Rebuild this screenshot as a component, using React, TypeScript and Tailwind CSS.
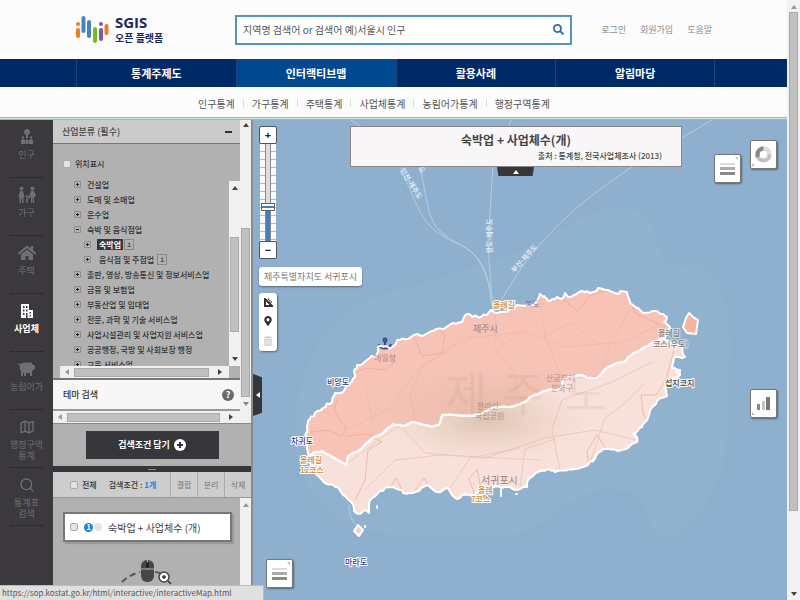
import React from "react";
import { FaSearch, FaHome, FaTrashAlt, FaMapMarkerAlt } from "react-icons/fa";
import { Search, Map as MapIcon } from "lucide-react";

type Pt = [number, number];

/* ---------- coast geometry ---------- */

const NORTH_COAST: Pt[] = [
  [309, 458], [308, 452], [306, 438], [307, 427], [308, 421], [315, 413], [323, 408], [332, 402], [335, 393],
  [343, 392], [348, 385], [355, 377], [354, 372], [357, 365], [367, 360], [377, 354], [378, 347], [392, 347],
  [400, 340], [408, 339], [417, 334], [422, 336], [428, 333], [443, 329], [453, 323], [462, 322], [467, 314],
  [473, 317], [487, 315], [491, 310], [497, 313], [513, 309], [517, 305], [527, 305], [536, 302], [540, 294],
  [550, 301], [557, 297], [563, 298], [565, 293], [568, 297], [582, 291], [590, 293], [598, 288], [608, 290],
  [615, 293], [627, 292], [630, 303], [637, 308], [643, 313], [652, 311], [663, 314], [667, 317], [664, 322],
  [670, 327], [669, 332], [663, 339],
];

const BORDER: Pt[] = [
  [663, 339], [653, 342], [643, 348], [628, 357], [626, 361], [617, 363], [608, 367], [597, 378], [587, 378],
  [582, 375], [568, 377], [563, 381], [560, 389], [550, 389], [540, 393], [530, 397], [525, 402], [515, 406],
  [495, 407], [483, 413], [472, 416], [453, 415], [442, 415], [439, 425], [432, 427], [412, 422], [403, 426],
  [393, 424], [383, 433], [370, 440], [362, 448], [348, 456], [346, 465], [338, 460], [322, 451], [313, 453],
  [309, 458],
];

const SOUTH_COAST: Pt[] = [
  [309, 458], [312, 470], [325, 483], [338, 487], [343, 495], [353, 504], [354, 511], [358, 514], [365, 510],
  [369, 513], [370, 500], [380, 491], [388, 487], [402, 490], [403, 493], [413, 493], [427, 485], [437, 492],
  [448, 488], [452, 495], [457, 499], [462, 495], [475, 495], [480, 489], [493, 487], [507, 487], [517, 490],
  [527, 487], [528, 480], [538, 472], [548, 469], [555, 472], [575, 469], [588, 465], [603, 449], [618, 451],
  [628, 448], [637, 442], [637, 437], [633, 434], [642, 427], [648, 418], [650, 410], [657, 401], [667, 396],
  [665, 387], [672, 378], [680, 375], [680, 370], [672, 368], [675, 357], [685, 357], [682, 352], [682, 347],
  [672, 343], [663, 339],
];

/* Breaks every segment into short pieces and shifts the new points a little, for a ragged shore. */
function ragged(points: Pt[], amount: number): Pt[] {
  const out: Pt[] = [points[0]];
  for (let i = 1; i < points.length; i++) {
    const [x0, y0] = points[i - 1];
    const [x1, y1] = points[i];
    const n = Math.max(1, Math.round(Math.hypot(x1 - x0, y1 - y0) / 3));
    for (let k = 1; k < n; k++) {
      const x = x0 + ((x1 - x0) * k) / n;
      const y = y0 + ((y1 - y0) * k) / n;
      const s = Math.sin(x * 12.9 + y * 78.2) * 43758.5;
      const r = (s - Math.floor(s) - 0.5) * 2 * amount;
      out.push([x + r * 0.5, y + r]);
    }
    out.push([x1, y1]);
  }
  return out;
}

const toPoints = (p: Pt[]) => p.map(([x, y]) => `${x.toFixed(1)},${y.toFixed(1)}`).join(" ");

const border = ragged(BORDER, 0.6);
const north = toPoints([...ragged(NORTH_COAST, 1.8), ...border]);
const south = toPoints([...ragged(SOUTH_COAST, 1.2), ...border]);

/* ---------- data ---------- */

const MENUS = ["통계주제도", "인터랙티브맵", "활용사례", "알림마당"];
const SUBMENUS = ["인구통계", "가구통계", "주택통계", "사업체통계", "농림어가통계", "행정구역통계"];

const TREE = [
  { label: "건설업" },
  { label: "도매 및 소매업" },
  { label: "운수업" },
  { label: "숙박 및 음식점업", open: true },
  { label: "숙박업", child: true, selected: true },
  { label: "음식점 및 주점업", child: true },
  { label: "출판, 영상, 방송통신 및 정보서비스업" },
  { label: "금융 및 보험업" },
  { label: "부동산업 및 임대업" },
  { label: "전문, 과학 및 기술 서비스업" },
  { label: "사업시설관리 및 사업지원 서비스업" },
  { label: "공공행정, 국방 및 사회보장 행정" },
  { label: "교육 서비스업" },
];

/* ---------- icons ---------- */

const Logo = () => (
  <svg width="34" height="30" viewBox="0 0 34 30" fill="none" strokeLinecap="round" strokeWidth="4" aria-hidden="true">
    <path d="M3 15v6" stroke="#f07d1e" />
    <circle cx="3" cy="9" r="2" fill="#f07d1e" />
    <path d="M8.500 3v13" stroke="#4a83b8" />
    <path d="M14 7v14" stroke="#4a83b8" />
    <path d="M20 14v12" stroke="#76b82a" />
    <path d="M26 15v9" stroke="#7a5ba6" />
    <circle cx="26" cy="9" r="2" fill="#7a5ba6" />
    <path d="M31.500 11v7" stroke="#f07d1e" />
  </svg>
);

const PeopleIcon = () => (
  <svg width="14" height="16" viewBox="0 0 14 16" fill="currentColor" aria-hidden="true">
    <circle cx="7" cy="3" r="3" />
    <path d="M6 6h2v3H6zM1 15v-4l2-1 2 1v4zM5.500 15v-4L7 10l1.500 1v4zM9 15v-4l2-1 2 1v4z" />
    <circle cx="3" cy="8.500" r="1.200" />
    <circle cx="11" cy="8.500" r="1.200" />
  </svg>
);

const FamilyIcon = () => (
  <svg width="20" height="18" viewBox="0 0 20 18" fill="currentColor" aria-hidden="true">
    <circle cx="4.500" cy="2.500" r="2" />
    <path d="M3 5h3l1.500 6H6.500v6H5v-4H4v4H2.500v-6H1.500z" />
    <circle cx="15.500" cy="2.500" r="2" />
    <path d="M14 5h3l2 5-1 1-1-1v7h-1.200v-5h-.600v5H14v-7l-2 3-1-.500z" />
    <circle cx="10" cy="10.500" r="1.200" />
    <path d="M9 12.500h2V17h-.700v-2h-.600v2H9z" />
  </svg>
);

const BuildingIcon = () => (
  <svg width="14" height="18" viewBox="0 0 14 18" fill="currentColor" aria-hidden="true">
    <path
      fillRule="evenodd"
      d="M1 2h8v6h4v8H1zM3 4v2h1.500V4zM6 4v2h1.500V4zM3 7.500v2h1.500v-2zM6 7.500v2h1.500v-2zM3 11v2h1.500v-2zM6 11v5h1.500v-5zM9.500 10v1.500H11V10zM9.500 13v1.500H11V13z"
    />
  </svg>
);

const PigIcon = () => (
  <svg width="20" height="18" viewBox="0 0 20 18" fill="currentColor" aria-hidden="true">
    <path d="M1 3l2 1.500C5 2.500 9 2 12 3l2-1.500 1 2.500 3 2v3l-2 1-1 2v4h-2v-3l-4 .200V16H7v-3l-1-.500V16H4v-5C2.500 9.500 2.500 7 3 5.500L1 4.500z" />
  </svg>
);

const MouseIcon = () => (
  <svg width="84" height="36" viewBox="0 0 84 36" fill="none" aria-hidden="true">
    <path d="M18 23C23 18 29 15 36 13M51 13c3 0 5 1 7 2" stroke="#555" strokeWidth="2" strokeDasharray="6 4" />
    <rect x="37" y="1" width="13" height="22" rx="6" fill="#474747" />
    <path d="M37 10h13M43.500 1v9" stroke="#b0b1b0" />
    <rect x="42" y="3" width="3" height="6" rx="1.500" fill="#222" />
    <circle cx="60" cy="18" r="5" fill="#fff" stroke="#444" strokeWidth="1.500" />
    <path d="M58 18h4M60 16v4M64 22l3 3" stroke="#333" strokeWidth="1.500" />
  </svg>
);

const LinesIcon = () => (
  <svg width="25" height="27" viewBox="0 0 25 27" aria-hidden="true">
    <path d="M5 8h15v2H5z" fill="#ddd" />
    <path d="M5 12h15v3H5z" fill="#aaa" />
    <path d="M5 17h15v3H5z" fill="#8a8a8a" />
    <path d="M20 2h3v3z" fill="#bbb" />
  </svg>
);

const DonutIcon = () => (
  <svg width="25" height="27" viewBox="0 0 25 27" fill="none" strokeWidth="4" aria-hidden="true">
    <circle cx="12.500" cy="13.500" r="6" stroke="#c0c0c0" />
    <path d="M7 16a6 6 0 0 1 5.500-8.500" stroke="#888" />
    <path d="M12.500 7.500a6 6 0 0 1 6 6" stroke="#ddd" />
    <path d="M1 22v3h3z" fill="#bbb" stroke="none" />
  </svg>
);

const BarsIcon = () => (
  <svg width="25" height="27" viewBox="0 0 25 27" aria-hidden="true">
    <path d="M6 14h3v6H6z" fill="#888" />
    <path d="M11 11h3v9h-3z" fill="#c4c4c4" />
    <path d="M15 7h4v13h-4z" fill="#777" />
    <path d="M1 22v3h3z" fill="#bbb" />
  </svg>
);

const SIDEBAR = [
  { lines: ["인구"], icon: <PeopleIcon /> },
  { lines: ["가구"], icon: <FamilyIcon /> },
  { lines: ["주택"], icon: <FaHome size={18} /> },
  { lines: ["사업체"], icon: <BuildingIcon />, active: true },
  { lines: ["농림어가"], icon: <PigIcon /> },
  { lines: ["행정구역", "통계"], icon: <MapIcon size={16} strokeWidth={2} /> },
  { lines: ["통계표", "검색"], icon: <Search size={16} strokeWidth={2} /> },
];

/* ---------- small parts ---------- */

const ARROWS = {
  up: "M0 5h6L3 1z",
  down: "M0 1h6L3 5z",
  left: "M5 0v6L1 3z",
  right: "M1 0v6l4-3z",
};

function Arrow({ dir, color = "#444" }: { dir: keyof typeof ARROWS; color?: string }) {
  return (
    <svg width="6" height="6" viewBox="0 0 6 6" className="shrink-0" aria-hidden="true">
      <path d={ARROWS[dir]} fill={color} />
    </svg>
  );
}

function HScroll({ className = "" }: { className?: string }) {
  return (
    <div className={`flex h-3 items-center gap-1 bg-[#f0f0f0] pl-1 pr-[6px] ${className}`}>
      <Arrow dir="left" color="#999" />
      <div className="mr-1 h-[9px] flex-1 border border-[#aaa] bg-[#c1c1c1]" />
      <Arrow dir="right" />
    </div>
  );
}

function Check({ id }: { id: string }) {
  return (
    <input
      id={id}
      type="checkbox"
      className="size-2 shrink-0 appearance-none rounded-[2px] border border-[#aaa] bg-[#e4e4e4] checked:bg-[#1e7fd6]"
    />
  );
}

function Header() {
  return (
    <header className="bg-[#fcfcfc]">
      <div className="flex h-[59px] items-center pl-[75px] pr-[75px]">
        <a href="#home" className="flex w-[160px] items-center gap-[6px]">
          <Logo />
          <span className="flex flex-col text-[#1b2a5c]">
            <span className="font-['Open_Sans',sans-serif] text-[15px] font-bold leading-[15px]">SGIS</span>
            <span className="text-[10px] font-bold leading-[15px]">오픈 플랫폼</span>
          </span>
        </a>
        <form className="flex h-[30px] flex-1 items-center border-2 border-[#5592c4] bg-white pl-[6px] pr-[6px]">
          <input
            aria-label="검색"
            placeholder="지역명 검색어 or 검색어 예)서울시 인구"
            className="min-w-0 flex-1 bg-transparent text-[10px] outline-none placeholder:text-[#555]"
          />
          <button type="button" aria-label="검색" className="text-[#2f6aa8]">
            <FaSearch size={11} />
          </button>
        </form>
        <nav className="ml-[29px] flex gap-[14px] text-[9px] text-[#8a8a8a]">
          <a href="#login">로그인</a>
          <a href="#join">회원가입</a>
          <a href="#help">도움말</a>
        </nav>
      </div>
      <nav className="grid h-7 grid-cols-4 bg-[#002a66] pl-[76px] pr-[72px]">
        {MENUS.map((m, i) => (
          <a
            key={m}
            href="#menu"
            className={`flex items-center justify-center border-l border-[#1f467c] text-[11px] font-bold text-white last:border-r ${
              i === 1 ? "bg-[#004990]" : ""
            }`}
          >
            {m}
          </a>
        ))}
      </nav>
      <nav className="flex h-[30px] items-center pl-[198px] pt-[2px] text-[10px] text-[#555]">
        {SUBMENUS.map((m) => (
          <a key={m} href="#sub" className="flex items-center after:mx-2 after:h-2 after:w-px after:bg-[#ddd] last:after:hidden">
            {m}
          </a>
        ))}
      </nav>
      <div className="h-[3px] border-y border-[#8fb9d6] bg-[#cfe8d8]" />
    </header>
  );
}

function Sidebar() {
  return (
    <nav className="w-[53px] shrink-0 bg-[#3b393e] px-[10px]">
      {SIDEBAR.map((s) => (
        <a
          key={s.lines[0]}
          href="#stat"
          className={`flex h-[58px] flex-col items-center whitespace-nowrap border-b border-dotted border-[#1c1b20] pt-2 text-[9px] leading-[11px] ${
            s.active ? "font-bold text-white" : "text-[#706f73]"
          }`}
        >
          <span className="mb-[3px] flex h-[18px] items-center">{s.icon}</span>
          {s.lines.map((l) => (
            <span key={l}>{l}</span>
          ))}
        </a>
      ))}
    </nav>
  );
}

function Tree() {
  return (
    <ul className="h-[189px] flex-1 overflow-hidden whitespace-nowrap pl-[14px] text-[8px] font-medium text-[#333]">
      {TREE.map((t) => (
        <li key={t.label} className={`flex h-[15px] items-center ${t.child ? "pl-[10px]" : ""}`}>
          <button type="button" aria-label={t.label} className="mr-[6px]">
            <svg width="7" height="7" viewBox="0 0 7 7" className="block">
              <path d="M.500.500h6v6h-6z" fill="none" stroke="#8c8c8c" />
              <path d={t.open ? "M2 3h3v1H2z" : "M2 3h3v1H2zM3 2h1v3H3z"} fill="#222" />
            </svg>
          </button>
          <span className={t.selected ? "bg-[#37363b] px-[2px] leading-[11px] font-bold text-white" : t.child ? "px-[2px]" : ""}>
            {t.label}
          </span>
          {t.child && (
            <button type="button" aria-label="정보" className="ml-px h-[11px] w-[10px] border border-[#888] font-mono text-[8px] leading-[9px]">
              i
            </button>
          )}
        </li>
      ))}
    </ul>
  );
}

function Panel() {
  return (
    <aside className="flex w-[200px] shrink-0 flex-col border-r-2 border-[#8b8b8b] bg-[#b0b1b0]">
      <div className="flex">
        <div className="min-w-0 flex-1">
          <div className="flex h-6 items-center justify-between border-b border-[#777] bg-[#cbcbcb] pl-[9px] pr-2 text-[9px] font-medium text-[#444]">
            산업분류 (필수)
            <button type="button" aria-label="접기" className="h-[2px] w-[7px] bg-[#333]" />
          </div>
          <div className="flex h-[33px] items-center gap-1 pl-[10px] pt-[7px] text-[8px] font-medium text-[#333]">
            <Check id="pos" />
            <label htmlFor="pos">위치표시</label>
          </div>
          <div className="flex pl-[7px]">
            <Tree />
            <div className="mt-1 flex w-[11px] flex-col items-center justify-between bg-[#f0f0f0] py-1">
              <Arrow dir="up" />
              <div className="mt-[46px] mb-6 w-[9px] flex-1 border border-[#aaa] bg-[#c1c1c1]" />
              <Arrow dir="down" />
            </div>
          </div>
          <HScroll className="ml-[7px] mr-[11px]" />
          <div className="flex h-[33px] items-center justify-between border-y-2 border-t-[#777] border-b-[#999] bg-[#f8f7f7] pl-[10px] pr-[6px] text-[9px] font-medium text-[#333]">
            테마 검색
            <button type="button" aria-label="도움말" className="size-3 rounded-full bg-[#6a6a6a] text-[9px] font-bold leading-3 text-white">
              ?
            </button>
          </div>
          <HScroll />
        </div>
        <div className="flex w-[11px] flex-col items-center bg-[#f0f0f0] pt-[2px] pb-4">
          <Arrow dir="up" />
          <div className="mt-[100px] mb-1 w-[9px] flex-1 border border-[#aaa] bg-[#c1c1c1]" />
          <Arrow dir="down" color="#888" />
        </div>
      </div>
      <div className="flex h-[43px] items-center justify-center border-t border-[#888]">
        <button type="button" className="flex h-7 w-[133px] items-center justify-center gap-1 bg-[#37363b] text-[9px] font-bold text-white">
          검색조건 담기
          <svg width="12" height="12" viewBox="0 0 12 12" aria-hidden="true">
            <circle cx="6" cy="6" r="6" fill="#fff" />
            <path d="M3 6h6M6 3v6" stroke="#37363b" strokeWidth="2" />
          </svg>
        </button>
      </div>
      <div className="flex h-[6px] items-center justify-center bg-[#37363b]">
        <div className="h-px w-2 bg-[#888]" />
      </div>
      <div className="flex h-[26px] items-stretch border-b border-[#999] bg-[#cdcdcd] text-[8px] text-[#777]">
        <div className="flex flex-1 items-center gap-1 pl-[17px] font-medium text-[#333]">
          <Check id="all" />
          <label htmlFor="all">전체</label>
          <span className="ml-2">
            검색조건 : <b className="text-[#1e86dd]">1개</b>
          </span>
        </div>
        {["결합", "분리", "삭제"].map((b) => (
          <button key={b} type="button" className="w-[27px] border-l border-[#aaa]">
            {b}
          </button>
        ))}
      </div>
      <div className="flex min-h-0 flex-1 justify-between">
        <div className="flex flex-1 flex-col overflow-hidden pl-[10px] pr-2 pt-[14px]">
          <div className="flex h-[30px] shrink-0 items-center border-2 border-[#777] bg-white pl-[5px] text-[10px] text-[#444] shadow-[2px_2px_1px_#999]">
            <Check id="cond" />
            <span className="ml-[6px] flex size-[9px] items-center justify-center rounded-full bg-[#1e7fd6] text-[8px] font-bold text-white">1</span>
            <span className="mr-[6px] ml-px size-2 rounded-full bg-[#e4e4e4]" />
            <label htmlFor="cond">숙박업 + 사업체수 (개)</label>
          </div>
          <div className="ml-[41px] mt-[17px]">
            <MouseIcon />
          </div>
        </div>
        <div className="flex w-[11px] flex-col items-center bg-[#f0f0f0] pt-1">
          <Arrow dir="up" color="#999" />
        </div>
      </div>
    </aside>
  );
}

function JejuMap() {
  return (
    <svg
      viewBox="253 120 534 480"
      preserveAspectRatio="xMinYMin slice"
      className="absolute inset-0 size-full font-['Noto_Sans_CJK_KR',sans-serif]"
      role="img"
      aria-label="제주도"
    >
      <defs>
        <radialGradient id="peak">
          <stop offset="0" stopColor="#bfa98d" stopOpacity=".5" />
          <stop offset="1" stopColor="#d8b8a0" stopOpacity="0" />
        </radialGradient>
        <clipPath id="southClip">
          <polygon points={south} />
        </clipPath>
        <clipPath id="northClip">
          <polygon points={north} />
        </clipPath>
      </defs>
      <path d="M253 120h534v480H253z" fill="#8eb0ce" />
      <path d="M295 430C298 360 330 310 380 296 440 275 520 260 570 225 600 205 640 200 652 225c6 20 12 45 35 41 30-8 45 40 43 90-2 50-2 100-10 120-10 25-25 45-40 58-12 5-20 5-27-2-8-20-8-40-35-42-60-4-60 45-118 45-60 0-130 10-170-25-25-20-35-40-35-80z" fill="#92b4d1" opacity=".6" />

      <g fill="none" stroke="#b6cddd" strokeWidth="1">
        <path d="M351 120l12 8M400 167c14 30 18 45 29 58 20 20 35 15 50 35 12 18 10 35 14 50" />
        <path d="M418 160c10 40 8 50 18 67 16 18 35 18 44 36 12 22 10 30 13 48" />
        <path d="M511 120l-18 45-5 80 5 66" />
        <path d="M712 120l-80 47c-50 33-80 60-110 100l-28 44" />
        <path d="M349 505c0 10 3 15 7 20" />
      </g>

      <polygon points={north} fill="#f7c3b7" />
      <g clipPath="url(#northClip)">
        <ellipse cx="490" cy="408" rx="125" ry="45" fill="url(#peak)" opacity=".6" />
      </g>
      <polygon points={south} fill="#f8e1da" />
      <g clipPath="url(#southClip)">
        <ellipse cx="485" cy="420" rx="100" ry="42" fill="url(#peak)" />
      </g>

      <g fill="none" stroke="#eda994" strokeWidth="1" opacity=".7">
        <path d="M310 432l18-2 14 6 4-8-12-18 3-10M346 436l22-2 14 8-14 8-3 30-10 20M355 372l12-4 18 2 8-6 2-10M414 336l8 20 20-3 3-18-6-5M560 297l18 14 12-15 15-5M627 293l8 20 30 14" />
        <path d="M674 350l-8 30-10 15-15 0 2 18 4 8-13 14M605 447l-8-12-10 16 2 14M475 495l-6-16 8-10 4 20M414 492l10-14 5 8M390 488l6-10 6 12" />
      </g>
      <g fill="none" stroke="#e9b5a5" strokeWidth="1" opacity=".55">
        <path d="M540 297l5 40 10 25 8 18M415 420l-5-25 12-28 25-16 18-20M365 382l8 45M320 408l30 20 40-20 30-40 45-30 60-6 40 15 60-5 35-18M496 315l-2 32 20 25 5 30M630 310l-20 35-8 25M543 337l28-15 30 25M465 345l20-25 18 25 30-22" />
        <path d="M345 465l40-30 20-12M365 490l30-30 45-5 100 5M400 425l25 28 60 5 60-20 50-8 40 10M560 470l-8-40 10-30 50-18 40-20M520 487l5-38 30-10M590 463l15-45 20-15 20-20M450 488l20-30 50-10" />
      </g>

      <g fill="#a07860" opacity=".1" fontSize="46">
        <text x="445" y="410">제</text>
        <text x="502" y="410">주</text>
        <text x="565" y="410">도</text>
      </g>

      <g stroke="#3d4a88" strokeWidth="2" fill="none">
        <circle cx="385" cy="340" r="1.500" />
        <path d="M385 342v6M379 344c1 6 11 6 12 0" />
      </g>

      <polygon points={north} fill="none" stroke="#fff" strokeWidth="2" strokeLinejoin="round" />
      <polygon points={south} fill="none" stroke="#fff" strokeWidth="2" strokeLinejoin="round" />
      <g stroke="#fff" strokeWidth="2" strokeLinejoin="round">
        <path d="M689 313l4 4 5 3-2 14-9-1-4-6 3-9z" fill="#f8b3a0" />
        <path d="M358 525l5 5-4 6-5-5z" fill="#f8cfc4" />
        <path d="M501 490v6M517 494h-1M377 506v2M365 526v1M676 372l3 2" strokeLinecap="round" fill="none" />
      </g>

      <g fontSize="8" fontWeight="500" paintOrder="stroke" stroke="#fff" strokeWidth="2" strokeLinejoin="round">
        <g fill="#3b3f8a">
          <text x="327" y="385">비양도</text>
          <text x="291" y="444">차귀도</text>
          <text x="345" y="565">마라도</text>
        </g>
        <g fill="#d08830">
          <text x="493" y="308">올레길</text>
          <text x="300" y="463">올레길</text>
          <text x="300" y="473">12코스</text>
          <text x="478" y="493">올레</text>
          <text x="471" y="502">7코스</text>
        </g>
        <text x="665" y="386" fill="#444">섭지코지</text>
        <text x="658" y="336" fill="#8a7f78" strokeOpacity=".5">올레길</text>
        <text x="653" y="347" fill="#8a7f78" strokeOpacity=".5">코스(우도)</text>
      </g>
      <g fill="#a0807c" fontSize="9">
        <text x="473" y="332">제주시</text>
        <text x="481" y="484" fontSize="10">서귀포시</text>
        <g fontSize="8" opacity=".75">
          <text x="374" y="361">애월항</text>
          <text x="525" y="307" fill="#7266a8">북도</text>
          <text x="477" y="409">한라산</text>
          <text x="475" y="419">국립공원</text>
          <text x="546" y="381">산굼부리</text>
          <text x="551" y="391">분화구</text>
        </g>
      </g>
      <g fill="#eef4f8" fontSize="7" fontWeight="500" textAnchor="middle">
        <text transform="translate(409 185) rotate(58)">인천-제주도</text>
        <text transform="translate(492 236) rotate(-90)">완도-제주도</text>
        <text transform="translate(526 260) rotate(-48)">부산-제주도</text>
        <text transform="translate(420 171) rotate(58)">도</text>
      </g>
    </svg>
  );
}

const MAP_BUTTON = "absolute flex h-[29px] w-[27px] items-center justify-center rounded-[2px] border border-[#777] bg-white shadow-[1px_1px_2px_#567]";
const ZOOM_BUTTON = "flex h-[18px] w-[18px] items-center justify-center rounded-[2px] border border-[#555] bg-white font-['Noto_Sans',sans-serif] text-[11px] font-bold text-[#222]";

function MapArea() {
  return (
    <main className="relative min-w-0 flex-1 overflow-hidden bg-[#8eb0ce]">
      <JejuMap />

      <div className="absolute left-[97px] right-[105px] top-[6px] flex h-[41px] flex-col border border-[#888] bg-[#f8f6f6] pt-1 text-[#444]">
        <h1 className="text-center text-[12px] font-bold leading-[17px]">숙박업 + 사업체수(개)</h1>
        <p className="pr-[19px] text-right text-[8px] font-medium leading-[15px]">출처 : 통계청, 전국사업체조사 (2013)</p>
      </div>
      <button
        type="button"
        aria-label="제목 접기"
        className="absolute left-[244px] top-[47px] flex h-[9px] w-[37px] items-center justify-center bg-[#37363b] [clip-path:polygon(0_0,100%_0,96%_100%,4%_100%)]"
      >
        <Arrow dir="up" color="#fff" />
      </button>

      <button
        type="button"
        aria-label="패널 접기"
        className="absolute left-0 top-[254px] flex h-[42px] w-[9px] items-center justify-center bg-[#37363b] [clip-path:polygon(0_0,100%_8%,100%_92%,0_100%)]"
      >
        <Arrow dir="left" color="#fff" />
      </button>

      <div className="absolute left-[6px] top-[6px] flex w-[18px] flex-col items-center">
        <button type="button" aria-label="확대" className={ZOOM_BUTTON}>
          +
        </button>
        <div className="flex h-[97px] w-4 justify-center bg-[repeating-linear-gradient(#fafafa_0_7px,#bbb_7px_8px)]">
          <input
            type="range"
            aria-label="지도 배율"
            min={0}
            max={100}
            defaultValue={34}
            className="h-full w-[14px] appearance-none bg-[linear-gradient(to_right,transparent_4px,#888_4px_5px,transparent_5px_9px,#888_9px_10px,transparent_10px),linear-gradient(#ddd_0_64%,#3f7fbd_64%)] bg-[length:100%_100%,6px_100%] bg-center bg-no-repeat [direction:rtl] [writing-mode:vertical-lr] [&::-webkit-slider-thumb]:h-2 [&::-webkit-slider-thumb]:w-[14px] [&::-webkit-slider-thumb]:appearance-none [&::-webkit-slider-thumb]:border [&::-webkit-slider-thumb]:border-[#666] [&::-webkit-slider-thumb]:bg-[linear-gradient(#fff_0_2px,#3f7fbd_2px_4px,#fff_4px)]"
          />
        </div>
        <button type="button" aria-label="축소" className={ZOOM_BUTTON}>
          −
        </button>
      </div>

      <div className="absolute left-[6px] top-[147px] flex h-[19px] items-center rounded-[3px] bg-white px-[5px] text-[9px] text-[#777] shadow-[0_1px_2px_#567]">
        제주특별자치도 서귀포시
      </div>

      <div className="absolute left-[6px] top-[173px] flex h-[58px] w-[18px] flex-col items-center justify-around rounded-[3px] bg-white text-[#333] shadow-[1px_1px_2px_#567]">
        <button type="button" aria-label="거리 재기">
          <svg width="9" height="9" viewBox="0 0 9 9" className="block">
            <path d="M1 1v7h7z" fill="none" stroke="#333" strokeWidth="2" />
            <path d="M4 1l4 4" stroke="#333" strokeDasharray="1 1" strokeWidth="2" />
          </svg>
        </button>
        <button type="button" aria-label="위치">
          <FaMapMarkerAlt size={10} />
        </button>
        <button type="button" aria-label="삭제" className="text-[#d4d4d4]">
          <FaTrashAlt size={10} />
        </button>
      </div>

      <button type="button" aria-label="목록" className={`${MAP_BUTTON} right-[46px] top-[34px]`}>
        <LinesIcon />
      </button>
      <button type="button" aria-label="비율" className={`${MAP_BUTTON} right-[10px] top-5`}>
        <DonutIcon />
      </button>
      <button type="button" aria-label="차트" className={`${MAP_BUTTON} right-[10px] top-[269px]`}>
        <BarsIcon />
      </button>
      <button type="button" aria-label="범례" className={`${MAP_BUTTON} bottom-3 left-[13px]`}>
        <LinesIcon />
      </button>
    </main>
  );
}

export default function App() {
  return (
    <div className="relative flex h-screen overflow-hidden bg-white font-['Noto_Sans_CJK_KR',sans-serif]">
      <div className="flex min-w-0 flex-1 flex-col">
        <Header />
        <div className="flex min-h-0 flex-1">
          <Sidebar />
          <Panel />
          <MapArea />
        </div>
      </div>
      <div className="flex w-[13px] shrink-0 flex-col items-center bg-[#f2f2f2] pt-1 pb-[3px]">
        <Arrow dir="up" color="#999" />
        <div className="mt-[2px] mb-20 w-[9px] flex-1 border border-[#aaa] bg-[#c0c0c0]" />
        <Arrow dir="down" />
      </div>
      <div className="absolute bottom-0 left-0 flex h-[15px] w-[264px] items-center rounded-tr-[2px] border-t border-r border-[#bbb] bg-[#e0e0e0] pl-[2px] text-[8px] text-[#555]">
        https://sop.kostat.go.kr/html/interactive/interactiveMap.html
      </div>
    </div>
  );
}
